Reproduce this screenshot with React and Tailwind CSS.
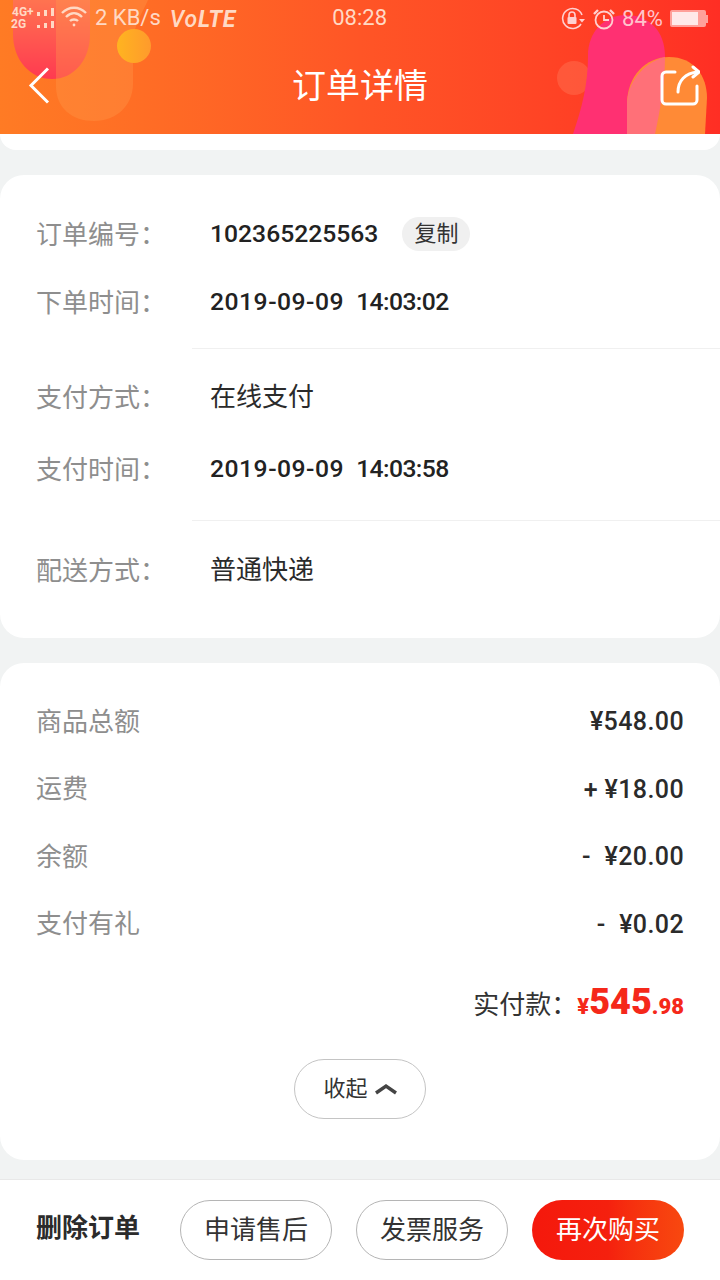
const cjk = "font-['Roboto','Noto_Sans_CJK_SC',sans-serif]"

function HeaderArt() {
  return (
    <svg className="absolute inset-0" width="720" height="134" viewBox="0 0 720 134">
      <defs>
        <linearGradient id="redBlob" x1="0" y1="0" x2="0" y2="1">
          <stop offset="0" stopColor="#ff7350" />
          <stop offset="1" stopColor="#ff3a50" />
        </linearGradient>
        <linearGradient id="sun" x1="0" y1="0" x2="1" y2="0">
          <stop offset="0" stopColor="#ffb420" />
          <stop offset="1" stopColor="#ff9a2c" />
        </linearGradient>
      </defs>
      <path d="M13 0 V34 C13 60 30 79 52 79 C74 79 90 60 90 34 V0 Z" fill="url(#redBlob)" />
      <path d="M56 0 V86 C56 108 72 121 94 121 C118 121 133 104 133 84 V44 C133 26 142 14 148 0 Z" fill="#ff9a4a" fillOpacity="0.35" />
      <circle cx="134" cy="46" r="17" fill="url(#sun)" />
      <circle cx="574" cy="78" r="17" fill="#ff7a5a" fillOpacity="0.4" />
      <path d="M573 134 C582 108 588 84 588 56 C588 32 604 15 626 15 C650 15 665 32 665 56 C665 84 660 110 655 134 Z" fill="#ff3072" />
      <path d="M627 134 V104 C627 76 646 57 669 57 C694 57 707 76 707 98 L705 134 Z" fill="#ff8a36" />
      <path d="M627 134 V104 C627 84 642 63 665 57 C665 84 660 110 655 134 Z" fill="#ff7078" />
    </svg>
  )
}

function SignalIcon() {
  return (
    <svg width="44" height="30" viewBox="0 0 44 30" fill="#ffd9c4" className="absolute left-[11px] top-[4px]">
      <text x="1" y="12" fontSize="12" fontWeight="700" fontFamily="Roboto">4G+</text>
      <text x="0" y="24" fontSize="12" fontWeight="700" fontFamily="Roboto">2G</text>
      <rect x="26" y="8" width="3" height="4" /><rect x="26" y="21" width="3" height="3" />
      <rect x="33" y="6" width="3" height="6" /><rect x="33" y="19" width="3" height="5" />
      <rect x="40" y="4" width="3" height="8" /><rect x="40" y="17" width="3" height="7" />
    </svg>
  )
}

function StatusBar() {
  return (
    <div className="relative h-[37px] flex items-center text-[#ffd9c4] text-[22px] leading-none">
      <SignalIcon />
      <svg width="26" height="22" viewBox="0 0 26 22" fill="none" stroke="#ffd9c4" strokeWidth="2.4" className="ml-[61px] mt-[-4px]">
        <path d="M1 7 C8 0 18 0 25 7" />
        <path d="M5 11 C10 6 16 6 21 11" />
        <path d="M9 15 C11 13 15 13 17 15" />
        <circle cx="13" cy="19" r="1.4" fill="#ffd9c4" stroke="none" />
      </svg>
      <span className="ml-[8px] font-['Roboto'] mt-[-1px]">2 KB/s</span>
      <span className="ml-[9px] font-['Roboto'] font-bold italic text-[23px] tracking-[0.8px] mt-[1px]"><span className="font-medium">Vo</span>LTE</span>
      <span className="ml-[96px] font-['Roboto'] mt-[-1px]">08:28</span>
      <svg width="25" height="24" viewBox="0 0 25 24" fill="none" stroke="#ffd0d0" strokeWidth="1.6" className="ml-[174px]">
        <path d="M21 8 A10 10 0 1 0 20 17" />
        <path d="M18 12 L24 12 L21 15.5 Z" fill="#ffd0d0" stroke="none" />
        <rect x="6.5" y="10" width="9" height="7" rx="1" fill="#ffd0d0" stroke="none" />
        <path d="M8 10 V8 A3 3 0 0 1 14 8 V10" />
      </svg>
      <svg width="22" height="24" viewBox="0 0 22 24" fill="none" stroke="#ffd0d0" strokeWidth="1.8" className="ml-[7px]">
        <circle cx="11" cy="13" r="8.5" />
        <path d="M11 8 V13 H16" />
        <path d="M1 7 L5 3 M21 7 L17 3" strokeWidth="2.4" />
      </svg>
      <span className="ml-[7px] font-['Roboto'] text-[#ffc4cc]">84%</span>
      <div className="ml-[7px] w-[36px] h-[17px] rounded-[2px] border-2 border-[#ffa09a] bg-[#ffa09a]">
        <div className="h-full w-[26px] bg-[#ffe9e9]" />
      </div>
      <div className="w-[2px] h-[8px] bg-[#ffa09a]" />
    </div>
  )
}

function NavBar() {
  return (
    <div className="relative h-[97px] flex items-center justify-between px-[20px]">
      <svg width="40" height="52" viewBox="0 0 40 52" fill="none" stroke="#ffffff" strokeWidth="3">
        <path d="M28 8.5 L11 25.5 L28 42.5" />
      </svg>
      <h1 className={`text-[34px] leading-none text-white font-normal ${cjk}`}>订单详情</h1>
      <svg width="40" height="42" viewBox="0 0 40 42" fill="none" stroke="#ffffff" strokeWidth="3" strokeLinecap="round" strokeLinejoin="round">
        <path d="M15 7 H6 A4 4 0 0 0 2 11 V35 A4 4 0 0 0 6 39 H33 A4 4 0 0 0 37 35 V21" />
        <path d="M18 27 C18 16 25 8 38 7" />
        <path d="M33 2 L39 7 L33 12" />
      </svg>
    </div>
  )
}

function InfoRow({ label, children }) {
  return (
    <div className="flex items-center h-[68px] pl-[36px]">
      <span className="w-[174px] shrink-0 mt-[-2px] text-[26px] leading-none text-[#8e8e8e] font-['Noto_Sans_CJK_SC',sans-serif]">{label + "\uFF1A"}</span>
      {children}
    </div>
  )
}

function PlainValue({ children }) {
  return <span className="text-[26px] leading-none text-[#2b2b2b]">{children}</span>
}

function DateValue({ date, time }) {
  return (
    <span className="text-[24.7px] leading-none font-medium text-[#222222] font-['Roboto']">
      <span className="tracking-[0.5px]">{date}</span>{" "}
      <span className="tracking-[-0.6px] ml-[6px]">{time}</span>
    </span>
  )
}

function PriceRow({ label, value, wide }) {
  return (
    <div className="flex items-center justify-between h-[67.5px] px-[36px]">
      <span className="text-[26px] leading-none text-[#8e8e8e]">{label}</span>
      <span className={`text-[25px] leading-none font-medium tracking-[0.4px] text-[#2b2b2b] font-['Roboto'] ${wide ? "[word-spacing:7px]" : ""}`}>{value}</span>
    </div>
  )
}

function OutlineButton({ children, className }) {
  return (
    <button className={`h-[60px] w-[152px] rounded-full border border-[#b5b5b5] bg-white text-[26px] leading-none text-[#333333] ${className}`}>
      {children}
    </button>
  )
}

export default function App() {
  return (
    <div className={`w-[720px] h-[1280px] overflow-hidden bg-[#f1f3f3] flex flex-col ${cjk}`}>
      <header className="relative h-[134px] shrink-0 overflow-hidden bg-gradient-to-r from-[#ff7b24] via-[#ff5526] to-[#ff2e24]">
        <HeaderArt />
        <div className="relative">
          <StatusBar />
          <NavBar />
        </div>
      </header>

      <div className="h-[16px] shrink-0 bg-white rounded-b-[24px]" />

      <section className="mt-[25px] h-[463px] shrink-0 bg-white rounded-[24px] pt-[25px]">
        <InfoRow label="订单编号">
          <span className="text-[24.7px] leading-none font-medium text-[#222222] font-['Roboto']">102365225563</span>
          <span className="ml-[24px] w-[68px] h-[34px] rounded-full bg-[#f0f0f0] flex items-center justify-center text-[22px] leading-none text-[#333333]">复制</span>
        </InfoRow>
        <InfoRow label="下单时间">
          <DateValue date="2019-09-09" time="14:03:02" />
        </InfoRow>
        <div className="ml-[192px] mt-[12px] border-t border-[#f0f0f0]" />
        <div className="mt-[14px]">
          <InfoRow label="支付方式">
            <PlainValue>在线支付</PlainValue>
          </InfoRow>
          <div className="h-[4px]" />
          <InfoRow label="支付时间">
            <DateValue date="2019-09-09" time="14:03:58" />
          </InfoRow>
        </div>
        <div className="ml-[192px] mt-[17px] border-t border-[#f0f0f0]" />
        <div className="mt-[15px]">
          <InfoRow label="配送方式">
            <PlainValue>普通快递</PlainValue>
          </InfoRow>
        </div>
      </section>

      <section className="mt-[25px] h-[497px] shrink-0 bg-white rounded-[24px] pt-[25px]">
        <PriceRow label="商品总额" value="¥548.00" />
        <PriceRow label="运费" value="+ ¥18.00" />
        <PriceRow label="余额" value="- ¥20.00" wide />
        <PriceRow label="支付有礼" value="- ¥0.02" wide />
        <div className="mt-[26px] flex items-baseline justify-end pr-[36px] h-[50px]">
          <span className="text-[26px] leading-none text-[#333333] font-['Noto_Sans_CJK_SC',sans-serif]">{"实付款\uFF1A"}</span>
          <span className="text-[#f5281a] font-['Roboto'] font-black leading-none">
            <span className="text-[22px]">¥</span>
            <span className="text-[36px]">545</span>
            <span className="text-[22px]">.98</span>
          </span>
        </div>
        <div className="mt-[25px] flex justify-center">
          <button className="w-[132px] h-[60px] rounded-full border border-[#c4c4c4] flex items-center justify-center gap-[7px] text-[22px] leading-none text-[#333333]">
            收起
            <svg width="22" height="12" viewBox="0 0 22 12" fill="none" stroke="#444444" strokeWidth="3.4">
              <path d="M1 10 L11 3 L21 10" />
            </svg>
          </button>
        </div>
      </section>

      <footer className="mt-[19px] flex-1 bg-white border-t border-[#e8e8e8] flex items-center px-[36px]">
        <span className="text-[26px] leading-none font-bold text-[#2b2b2b] mr-[40px] mt-[-4px]">删除订单</span>
        <OutlineButton>申请售后</OutlineButton>
        <OutlineButton className="ml-[24px]">发票服务</OutlineButton>
        <button className="ml-[24px] h-[60px] w-[152px] rounded-full bg-gradient-to-r from-[#f5180c] via-[#f5200e] to-[#f8480f] text-[26px] leading-none text-white">
          再次购买
        </button>
      </footer>
    </div>
  )
}
